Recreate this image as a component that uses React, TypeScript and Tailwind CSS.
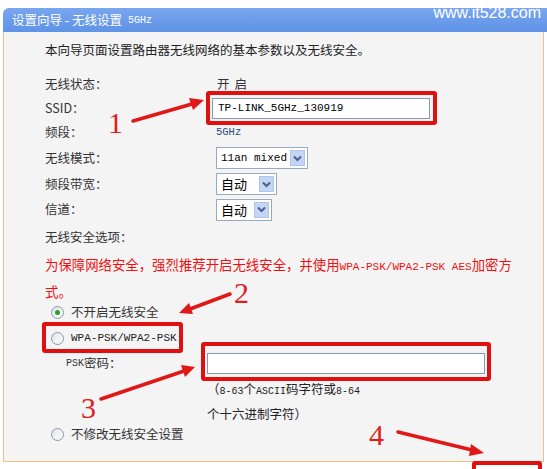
const cjk = "font-['Noto_Sans_CJK_SC',sans-serif]";
const mono = "font-['Liberation_Mono',monospace]";

const Radio = ({ checked = false }: { checked?: boolean }) => (
  <span className="w-[13px] h-[13px] rounded-full border border-[#8a9aa8] bg-gradient-to-br from-[#dfe3e8] to-white flex items-center justify-center shrink-0">
    {checked && <span className="w-[5px] h-[5px] rounded-full bg-[#2aa02a]" />}
  </span>
);

const Select = ({ label, width, isMono = false }: { label: string; width: string; isMono?: boolean }) => (
  <div className={`${width} h-[22px] bg-white border border-[#9aaabb] flex items-center pl-[4px] pr-[2px] justify-between`}>
    <span className={`${isMono ? `${mono} text-[11px]` : `${cjk} text-[13px]`} text-black`}>{label}</span>
    <span className="w-[15px] h-[16px] bg-[#c5d5f4] border border-[#b0c4ec] flex items-center justify-center">
      <svg width="9" height="7" viewBox="0 0 9 7">
        <path d="M1 1.5 L4.5 5 L8 1.5" stroke="#4a5f8c" strokeWidth="2" fill="none" />
      </svg>
    </span>
  </div>
);

const Row = ({ label, h, children }: { label: string; h: string; children?: React.ReactNode }) => (
  <div className={`flex items-center ${h}`}>
    <span className={`w-[171px] ${cjk} text-[12.5px] text-[#333]`}>{label}</span>
    {children}
  </div>
);

const Annotations = () => (
  <>
    <svg className="absolute inset-0 pointer-events-none" width="547" height="469">
      <g stroke="#e01818" strokeWidth="3.5" strokeLinecap="round" fill="#e01818">
        <line x1="133" y1="121" x2="192" y2="104" />
        <polygon points="204,100 189,98 193,110" stroke="none" />
        <line x1="230" y1="294" x2="190" y2="309" />
        <polygon points="179,313 189,303 193,314" stroke="none" />
        <line x1="101" y1="399" x2="184" y2="371" />
        <polygon points="195,367 181,365 185,377" stroke="none" />
        <line x1="398" y1="432" x2="472" y2="450" />
        <polygon points="484,453 471,444 469,456" stroke="none" />
      </g>
    </svg>
    <div className="absolute left-[206px] top-[91px] w-[231px] h-[34px] border-[4px] border-[#e01010] rounded-[3px]" />
    <div className="absolute left-[42px] top-[322px] w-[141px] h-[31px] border-[4px] border-[#e01010] rounded-[3px]" />
    <div className="absolute left-[201px] top-[342px] w-[290px] h-[39px] border-[4px] border-[#e01010] rounded-[3px]" />
    <div className="absolute left-[472px] top-[461px] w-[70px] h-[20px] border-[4px] border-[#e01010] rounded-[3px]" />
    <span className="absolute left-[108px] top-[108px] font-['Liberation_Serif',serif] text-[30px] leading-none text-[#e02020]">1</span>
    <span className="absolute left-[234px] top-[278px] font-['Liberation_Serif',serif] text-[30px] leading-none text-[#e02020]">2</span>
    <span className="absolute left-[81px] top-[393px] font-['Liberation_Serif',serif] text-[30px] leading-none text-[#e02020]">3</span>
    <span className="absolute left-[369px] top-[420px] font-['Liberation_Serif',serif] text-[30px] leading-none text-[#e02020]">4</span>
  </>
);

export default function App() {
  return (
    <div className="relative w-[547px] h-[469px] bg-white overflow-hidden">
      <div className="pl-[3px] pt-[8px]">
        <div className="h-[24px] bg-gradient-to-b from-[#79a6ee] to-[#5f93e6] rounded-tl-[6px] flex items-center pl-[9px]">
          <span className={`${cjk} text-[12.5px] text-white`}>设置向导 - 无线设置</span>
          <span className={`${mono} text-[10px] text-white ml-[6px]`}>5GHz</span>
        </div>
        <div className="w-[541px] h-[430px] bg-[#f4f4f5] border-l border-r border-b border-[#eec084] pl-[41px]">
          <div className={`h-[28px] pt-[8px] leading-[20px] ${cjk} text-[12.5px] text-[#222]`}>
            本向导页面设置路由器无线网络的基本参数以及无线安全。
          </div>
          <div className="h-[12px]" />
          <Row label="无线状态：" h="h-[24px]">
            <span className={`${cjk} text-[12.5px] text-[#333] ml-[1px] flex gap-[5px]`}>
              <span>开</span>
              <span>启</span>
            </span>
          </Row>
          <Row label="SSID：" h="h-[24px]">
            <div className="-ml-[4px] w-[218px] h-[21px] bg-white border border-[#7f9db9] flex items-center pl-[5px]">
              <span className={`${mono} text-[11px] text-black`}>TP-LINK_5GHz_130919</span>
            </div>
          </Row>
          <Row label="频段：" h="h-[25px]">
            <span className={`${mono} text-[10.5px] text-[#2c4a7a]`}>5GHz</span>
          </Row>
          <Row label="无线模式：" h="h-[26px]">
            <Select label="11an mixed" width="w-[92px]" isMono />
          </Row>
          <Row label="频段带宽：" h="h-[26px]">
            <Select label="自动" width="w-[61px]" />
          </Row>
          <Row label="信道：" h="h-[25px]">
            <Select label="自动" width="w-[56px]" />
          </Row>
          <div className={`h-[30px] flex items-center ${cjk} text-[12.5px] text-[#333]`}>无线安全选项：</div>
          <div className={`w-[475px] h-[48px] leading-[24px] ${cjk} text-[13.4px] text-[#ee1111]`}>
            为保障网络安全，强烈推荐开启无线安全，并使用<span className={`${mono} text-[11px]`}>WPA-PSK/WPA2-PSK AES</span>加密方式。
          </div>
          <div className="h-[25px] flex items-center gap-[7px] pl-[6px]">
            <Radio checked />
            <span className={`${cjk} text-[12.5px] text-[#333]`}>不开启无线安全</span>
          </div>
          <div className="h-[26px] flex items-center gap-[7px] pl-[6px]">
            <Radio />
            <span className={`${mono} text-[11px] text-[#222]`}>WPA-PSK/WPA2-PSK</span>
          </div>
          <div className="h-[24px] flex items-center">
            <span className="w-[162px] pl-[21px] flex items-center">
              <span className={`${mono} text-[10px] text-[#333]`}>PSK</span>
              <span className={`${cjk} text-[12.5px] text-[#333]`}>密码：</span>
            </span>
            <div className="w-[278px] h-[21px] bg-white border border-[#7f9db9]" />
          </div>
          <div className={`h-[47px] pl-[162px] pt-[3px] leading-[22px] ${cjk} text-[12.5px] text-[#222]`}>
            <div>（<span className={`${mono} text-[10px]`}>8-63</span>个<span className={`${mono} text-[10px]`}>ASCII</span>码字符或<span className={`${mono} text-[10px]`}>8-64</span></div>
            <div>个十六进制字符）</div>
          </div>
          <div className="h-[24px] flex items-center gap-[7px] pl-[6px]">
            <Radio />
            <span className={`${cjk} text-[12.5px] text-[#333]`}>不修改无线安全设置</span>
          </div>
        </div>
      </div>
      <span className="absolute right-[6px] top-[3px] font-['Liberation_Sans',sans-serif] text-[16px] leading-[20px] text-white">www.it528.com</span>
      <Annotations />
    </div>
  );
}
